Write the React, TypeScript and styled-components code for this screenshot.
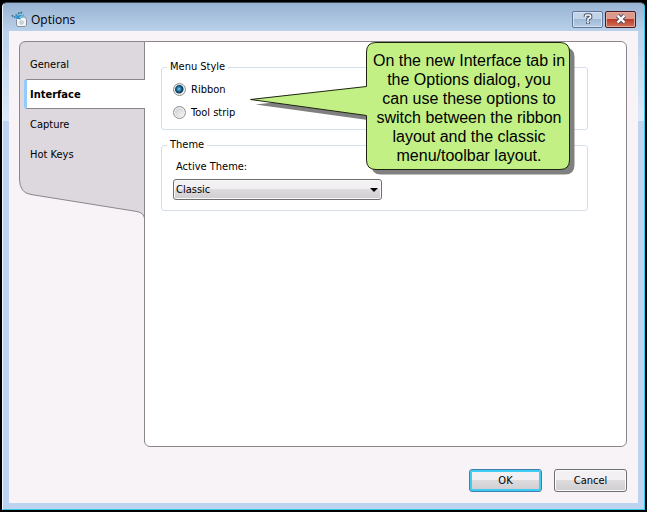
import React, { useState } from "react";
import styled, { createGlobalStyle } from "styled-components";

const Global = createGlobalStyle`
  * { box-sizing: border-box; }
  body { margin: 0; background: #000; color: #000; font: 11px/14px "DejaVu Sans Condensed", "Noto Sans", sans-serif; }
  button, select, input { font: inherit; color: inherit; margin: 0; }
`;

const Desktop = styled.div`
  min-height: 100vh;
  padding: 2px;
  background: #000;
  display: flex;
`;

const Window = styled.main`
  flex: 1;
  position: relative;
  display: flex;
  flex-direction: column;
  padding: 0 6px 6px;
  border: 1px solid #35c7e6;
  border-top-color: #3c4650;
  border-left-color: #eef5fc;
  border-radius: 5px 5px 0 0;
  background:
    linear-gradient(#98b3d2, #b9d1ea) top / 100% 28px no-repeat,
    linear-gradient(#b9d1ea, #dce9f8) 0 28px / 100% 90px no-repeat,
    #bdd3ef;
`;

const TitleBar = styled.header`
  height: 28px;
  display: flex;
  align-items: center;
  gap: 2px;
  padding: 4px 2px 0 2px;
  font: 12px/16px "Open Sans", "Noto Sans", sans-serif;
`;

const Title = styled.h1`
  flex: 1;
  margin: 0;
  padding: 1px 0 0 2px;
  font: inherit;
`;

const CaptionButton = styled.button<{ $close?: boolean }>`
  width: 31px;
  height: 17px;
  padding: 0;
  display: flex;
  align-items: center;
  justify-content: center;
  border: 1px solid ${p => (p.$close ? "#4c1a22" : "#60779a")};
  border-radius: 2px;
  box-shadow: inset 0 0 0 1px ${p => (p.$close ? "#e3a99d" : "#d4e2f2")};
  background: ${p => p.$close
    ? "linear-gradient(#dc9a8d 45%, #bc3c27 50%, #d0745c)"
    : "linear-gradient(#c3d4e8 45%, #a1b9d5 50%, #b7cde6)"};
`;

const Client = styled.div`
  flex: 1;
  display: flex;
  flex-direction: column;
  padding: 10px 11px 11px 10px;
  background: #f7f3f7;
`;

const Body = styled.div`
  flex: 1;
  display: flex;
`;

const Sidebar = styled.nav`
  position: relative;
  width: 126px;
  height: 178px;
  padding: 8px 0 0 5px;
  margin-right: -1px;
`;

const SidebarShape = styled.svg`
  position: absolute;
  inset: 0;
`;

const Tab = styled.button<{ $active: boolean }>`
  position: relative;
  display: block;
  width: 121px;
  height: 30px;
  padding: 2px 0 0 ${p => (p.$active ? "3px" : "6px")};
  text-align: left;
  border: ${p => (p.$active ? "solid #8c868c" : "0 solid transparent")};
  border-width: ${p => (p.$active ? "1px 0" : "0")};
  border-left: ${p => (p.$active ? "3px solid #94cbff" : "0")};
  border-radius: 3px 0 0 3px;
  background: ${p => (p.$active ? "#fff" : "transparent")};
  font-weight: ${p => (p.$active ? "bold" : "normal")};
  z-index: 1;
`;

const Panel = styled.section`
  flex: 1;
  padding: 18px 38px 16px 16px;
  border: 1px solid #8c868c;
  border-radius: 0 6px 6px 6px;
  background: #fff;
`;

const Group = styled.fieldset`
  min-width: 0;
  margin: 0 0 8px;
  padding: 4px 11px 10px;
  border: 1px solid #d6dfe7;
  border-radius: 3px;
`;

const RadioGroup = styled(Group)`
  padding-bottom: 5px;
`;

const Legend = styled.legend`
  margin-left: -6px;
  padding: 0 3px;
`;

const RadioLabel = styled.label`
  display: flex;
  align-items: center;
  gap: 5px;
  height: 23px;
`;

const Radio = styled.input`
  appearance: none;
  width: 13px;
  height: 13px;
  border: 1px solid #8e8f8f;
  border-radius: 50%;
  box-shadow: inset 0 0 0 1px #f4f4f4;
  background: radial-gradient(circle at 70% 70%, #f0f0f0, #c4c8cc);
  &:checked {
    background: radial-gradient(circle at 5px 5px, #8fdcf5 0, #2177a8 2px, #0c3350 4px, transparent 5px), #e4e8ec;
  }
`;

const FieldLabel = styled.label`
  display: block;
  padding: 4px 0 0 3px;
`;

const SelectBox = styled.span`
  position: relative;
  display: block;
  width: 209px;
  margin-top: 5px;
`;

const Select = styled.select`
  appearance: none;
  display: block;
  width: 100%;
  height: 21px;
  padding: 0 2px;
  border: 1px solid #706f70;
  border-radius: 3px;
  box-shadow: inset 0 0 0 1px #faf9fa;
  background: linear-gradient(#f3f0f3 48%, #dedbde 50%, #d0cdd0);
`;

const Arrow = styled.svg`
  position: absolute;
  right: 4px;
  top: 9px;
  pointer-events: none;
`;

const Footer = styled.footer`
  display: flex;
  justify-content: flex-end;
  gap: 12px;
  padding-top: 22px;
`;

const PushButton = styled.button<{ $default?: boolean }>`
  width: 73px;
  height: 23px;
  padding: 0;
  border: 1px solid ${p => (p.$default ? "#3c7fb1" : "#706f70")};
  border-radius: 3px;
  box-shadow: inset 0 0 0 ${p => (p.$default ? "2px #3fcdf4" : "1px #fcfbfc")};
  background: linear-gradient(#f3f0f3 48%, #dedbde 50%, #d0cdd0);
`;

const Callout = styled.aside`
  position: absolute;
  top: 39px;
  left: 247px;
  width: 326px;
  height: 133px;
  padding: 9px 5px 0 117px;
  font: 16px/19px "Liberation Sans", Arial, sans-serif;
  text-align: center;
  white-space: nowrap;
`;

const CalloutShape = styled.svg`
  position: absolute;
  inset: 0;
`;

const CalloutText = styled.p`
  position: relative;
  margin: 0;
`;

const bubble =
  "M126 .5H310Q319.500 .5 319.500 10V118Q319.500 127.500 310 127.500H126Q116.500 127.500 116.500 118V73.500L.5 57.500L116.500 44.500V10Q116.500 .5 126 .5Z";

const tabs = ["General", "Interface", "Capture", "Hot Keys"];
const styles = ["Ribbon", "Tool strip"];
const note = [
  "On the new Interface tab in",
  "the Options dialog, you",
  "can use these options to",
  "switch between the ribbon",
  "layout and the classic",
  "menu/toolbar layout.",
];

function AppIcon() {
  return (
    <svg width="16" height="16" viewBox="0 0 16 16" aria-hidden="true">
      <path d="M5.500 8.500L7.500 6H14l1.500 2.500v5.500L14 15.500H6.500L5.500 14z" fill="#f2f4f5" stroke="#84909a" />
      <path d="M4 7L6.500 4.500 13.500 3.500 9 8.500z" fill="#2593cb" />
      <path d="M8 6.500l2.500-2 2-.5-3 3.500z" fill="#7dd0ee" />
      <circle cx="10.500" cy="11.500" r="1.800" fill="#d2dade" stroke="#a0abb3" strokeWidth=".6" />
      <path d="M.8 4.200l1.400 1.400M3 6.500l1.500-1M4.500 3.500L6 4.500M7 3l1.500-1.500M9.500 2.500L11 1" fill="none" stroke="#2f6f92" strokeWidth="1.500" />
    </svg>
  );
}

export default function App() {
  const [tab, setTab] = useState("Interface");
  const [style, setStyle] = useState("Ribbon");
  return (
    <>
      <Global />
      <Desktop>
        <Window>
          <TitleBar>
            <AppIcon />
            <Title>Options</Title>
            <CaptionButton aria-label="Help">
              <svg width="10" height="12" viewBox="0 0 10 12">
                <path d="M2.500 4V3q0-1 1-1h3q1 0 1 1v1.500L5 6v2M5 9v2" fill="none" stroke="#48566b" strokeWidth="3.600" />
                <path d="M2.500 4V3q0-1 1-1h3q1 0 1 1v1.500L5 6v2M5 9v1.500" fill="none" stroke="#fff" strokeWidth="1.600" />
              </svg>
            </CaptionButton>
            <CaptionButton $close aria-label="Close">
              <svg width="12" height="10" viewBox="0 0 12 10">
                <path d="M2.500 1.500l7 7M9.500 1.500l-7 7" stroke="#535666" strokeWidth="4.400" />
                <path d="M2.500 1.500l7 7M9.500 1.500l-7 7" stroke="#fff" strokeWidth="2.400" />
              </svg>
            </CaptionButton>
          </TitleBar>
          <Client>
            <Body>
              <Sidebar aria-label="Option pages">
                <SidebarShape width="126" height="178" viewBox="0 0 126 178" aria-hidden="true">
                  <path d="M125.500 177.500Q125 172 118 170.500L12 153.500Q.5 152 .5 138V7Q.5 .5 7 .5H125.500Z" fill="#dcd8dd" stroke="#8c868c" />
                </SidebarShape>
                {tabs.map(t => (
                  <Tab key={t} $active={t === tab} onClick={() => setTab(t)}>{t}</Tab>
                ))}
              </Sidebar>
              <Panel>
                <RadioGroup>
                  <Legend>Menu Style</Legend>
                  {styles.map(s => (
                    <RadioLabel key={s}>
                      <Radio type="radio" name="style" checked={s === style} onChange={() => setStyle(s)} />
                      {s}
                    </RadioLabel>
                  ))}
                </RadioGroup>
                <Group>
                  <Legend>Theme</Legend>
                  <FieldLabel htmlFor="theme">Active Theme:</FieldLabel>
                  <SelectBox>
                    <Select id="theme"><option>Classic</option></Select>
                    <Arrow width="8" height="4" viewBox="0 0 8 4"><path d="M0 0h8L4 4z" /></Arrow>
                  </SelectBox>
                </Group>
              </Panel>
            </Body>
            <Footer>
              <PushButton $default>OK</PushButton>
              <PushButton>Cancel</PushButton>
            </Footer>
          </Client>
          <Callout>
            <CalloutShape width="326" height="133" viewBox="0 0 326 133" aria-hidden="true">
              <path d={bubble} fill="#808080" transform="translate(5 5)" />
              <path d={bubble} fill="#c3f085" stroke="#1c2410" />
            </CalloutShape>
            <CalloutText>
              {note.map(line => <React.Fragment key={line}>{line}<br /></React.Fragment>)}
            </CalloutText>
          </Callout>
        </Window>
      </Desktop>
    </>
  );
}
